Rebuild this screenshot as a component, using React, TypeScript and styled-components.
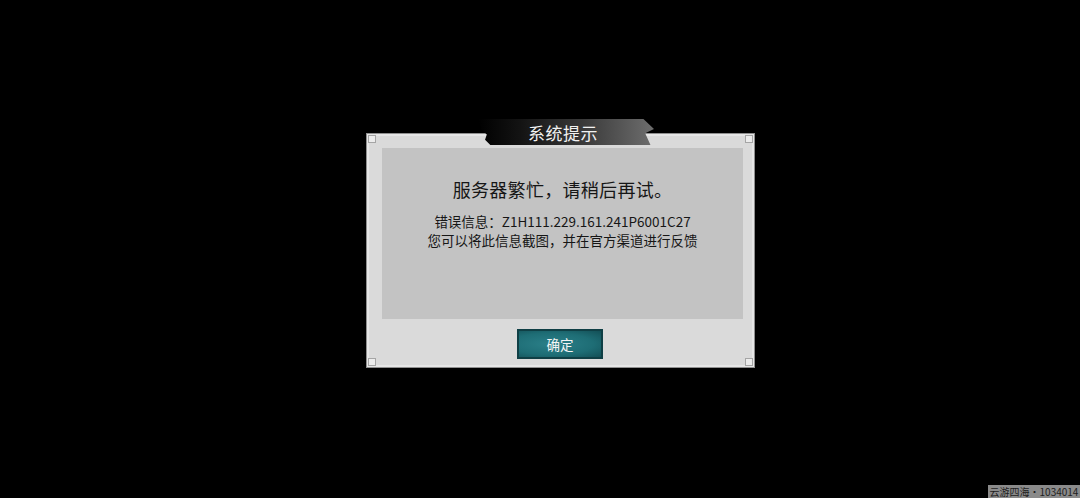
import React from 'react'
import styled, { createGlobalStyle } from 'styled-components'

const GlobalStyle = createGlobalStyle`
  html, body {
    margin: 0;
    padding: 0;
    background: #000;
  }
  body {
    font-family: "Noto Sans CJK SC", "Noto Sans", sans-serif;
  }
`

export default function App () {
  return (
    <>
      <GlobalStyle />
      <Screen>
        <Dialog>
          <Corner $pos='tl' />
          <Corner $pos='tr' />
          <Corner $pos='bl' />
          <Corner $pos='br' />
          <TitleBanner>
            <TitleText>系统提示</TitleText>
          </TitleBanner>
          <MessagePanel>
            <Headline>服务器繁忙，请稍后再试。</Headline>
            <Details>
              <div>错误信息：Z1H111.229.161.241P6001C27</div>
              <div>您可以将此信息截图，并在官方渠道进行反馈</div>
            </Details>
          </MessagePanel>
          <Footer>
            <ConfirmButton>确定</ConfirmButton>
          </Footer>
        </Dialog>
        <Watermark>云游四海·1034014</Watermark>
      </Screen>
    </>
  )
}

const Screen = styled.div`
  position: relative;
  width: 1080px;
  height: 498px;
  box-sizing: border-box;
  padding: 133px 0 0 366px;
  background: #000;
  overflow: hidden;
`

const Dialog = styled.div`
  position: relative;
  width: 389px;
  height: 235px;
  box-sizing: border-box;
  padding: 14px 11px 0 15px;
  background: #dadada;
  border: 1px solid #8f8f8f;
  box-shadow: inset 0 0 0 2px #e6e6e6;
  display: flex;
  flex-direction: column;
`

const cornerPlace: Record<string, string> = {
  tl: 'top: 1px; left: 1px;',
  tr: 'top: 1px; right: 1px;',
  bl: 'bottom: 1px; left: 1px;',
  br: 'bottom: 1px; right: 1px;',
}

const Corner = styled.span<{ $pos: string }>`
  position: absolute;
  ${p => cornerPlace[p.$pos]}
  width: 6px;
  height: 6px;
  background: #ececec;
  border: 1px solid #a5a5a5;
`

const TitleBanner = styled.div`
  position: absolute;
  top: -15px;
  left: 111px;
  width: 176px;
  height: 26px;
  display: flex;
  align-items: center;
  justify-content: center;
  padding-right: 6px;
  box-sizing: border-box;
  background: linear-gradient(90deg, #000 0%, #141414 25%, #3a3a3a 60%, #6e6e6e 100%);
  clip-path: polygon(0 0, 94% 0, 100% 38%, 95% 55%, 98% 100%, 7% 100%, 4% 80%, 5% 60%, 2% 40%);
`

const TitleText = styled.span`
  color: #f2f2f2;
  font-size: 17px;
  letter-spacing: 0.5px;
  line-height: 1;
`

const MessagePanel = styled.div`
  height: 171px;
  flex: none;
  box-sizing: border-box;
  padding-top: 29px;
  background: #c3c3c3;
  display: flex;
  flex-direction: column;
  align-items: center;
  color: #161616;
`

const Headline = styled.div`
  font-size: 18px;
  line-height: 24px;
  letter-spacing: 0.3px;
`

const Details = styled.div`
  margin-top: 11px;
  font-size: 13.5px;
  line-height: 19px;
  text-align: center;
`

const Footer = styled.div`
  flex: 1;
  display: flex;
  justify-content: center;
  padding-top: 10px;
  padding-right: 5px;
`

const ConfirmButton = styled.button`
  width: 86px;
  height: 30px;
  box-sizing: border-box;
  border: 2px solid #0f3f45;
  background: radial-gradient(ellipse at 40% 50%, #2b8089 0%, #1e6d75 60%, #134f56 100%);
  color: #f4f4f4;
  font-family: "Noto Sans CJK SC", sans-serif;
  font-size: 13.5px;
  padding: 0;
  cursor: pointer;
`

const Watermark = styled.div`
  position: absolute;
  right: 0;
  bottom: 0;
  width: 92px;
  height: 13px;
  background: #8a8a8a;
  color: #1e1e1e;
  font-size: 10px;
  line-height: 13px;
  text-align: center;
  white-space: nowrap;
  overflow: hidden;
`
